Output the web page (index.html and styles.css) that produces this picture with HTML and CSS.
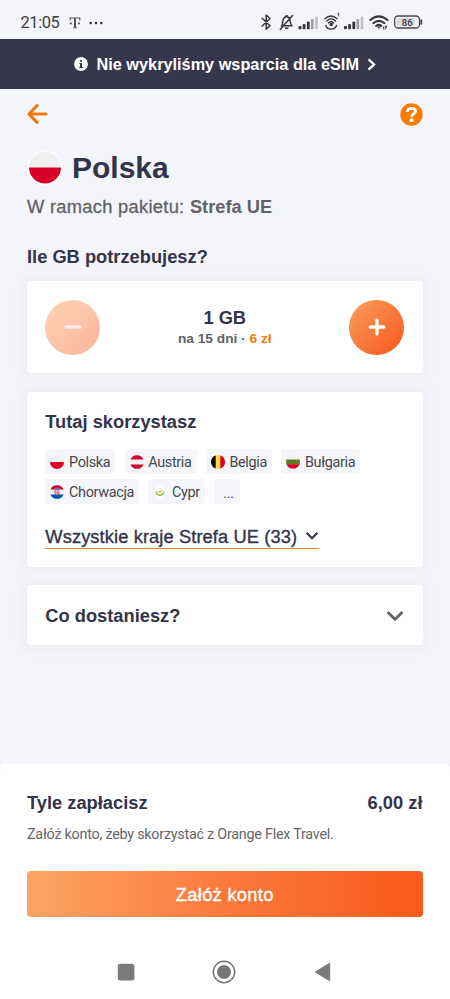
FILE: index.html
```
<!DOCTYPE html>
<html lang="pl">
<head>
<meta charset="utf-8">
<title>Polska</title>
<link rel="stylesheet" href="styles.css">
</head>
<body>
<div class="screen">
  <div class="status">
    <span class="clock">21:05</span>
    <svg class="carrier" width="12" height="14" viewBox="0 0 12 14"><path d="M1.200 4.500V2H10.800V4.500M4 11.700H8" fill="none" stroke="#55565b" stroke-width="1.100"/><path d="M5 2H7V11.500H5ZM1 6.500H2.800V8.300H1ZM9.200 6.500H11V8.300H9.200Z" fill="#55565b"/></svg>
    <svg class="more" width="14" height="4" viewBox="0 0 14 4"><g fill="#35363b"><circle cx="1.700" cy="2" r="1.300"/><circle cx="7" cy="2" r="1.300"/><circle cx="12.300" cy="2" r="1.300"/></g></svg>
    <svg class="indicators" width="164" height="20" viewBox="0 0 164 20">
      <g fill="none" stroke="#35363b" stroke-width="1.500" stroke-linejoin="round" stroke-linecap="round">
        <path d="M2.200 6.200 10 13.700 6.200 17.200V3L10 6.500 2.200 14"/>
        <path d="M21.500 13.800C23 12.500 22.500 10.500 23 8.200C23.600 5.700 25 4.800 26.500 4.800C28.800 4.800 30 6.500 30.200 9.200C30.300 11.800 30.700 12.800 32 13.800H24.500M20.300 17.200 32.500 3.500"/>
      </g>
      <path d="M24.500 15.500H29A2.300 2.300 0 0 1 24.500 15.500ZM25.600 3H27.800V5H25.600Z" fill="#35363b"/>
      <g fill="#35363b"><rect x="38.500" y="14" width="3" height="3.200" rx="1"/><rect x="42.700" y="12" width="2.800" height="5.200" rx="1"/><rect x="46.900" y="9.500" width="2.800" height="7.700" rx="1"/><rect x="84" y="14" width="3" height="3.200" rx="1"/><rect x="88.200" y="12" width="2.800" height="5.200" rx="1"/><rect x="92.400" y="9.500" width="2.800" height="7.700" rx="1"/></g>
      <g fill="#9b9ca1"><rect x="51" y="7" width="2.600" height="10.200" rx="1"/><rect x="96.500" y="7" width="2.600" height="10.200" rx="1"/></g>
      <g fill="#bfc0c6"><rect x="55.200" y="4.500" width="2.600" height="12.700" rx="1"/><rect x="100.700" y="4.500" width="2.600" height="12.700" rx="1"/></g>
      <g fill="none" stroke="#35363b" stroke-width="1.300" stroke-linecap="round">
        <path d="M64.800 6.800Q71 1.200 77.200 6.800M66.700 9Q71.200 4.800 75.600 9M68.600 11Q71.200 8.500 73.700 11M65.700 13.300Q67 17.200 71.200 17.200T76.600 13.300"/>
        <path d="M77.800 1.800 78.700 1.200V4" stroke-width=".9"/>
      </g>
      <circle cx="71.200" cy="12.500" r="1.700" fill="#35363b"/>
      <g fill="none" stroke="#35363b" stroke-width="2" stroke-linecap="round">
        <path d="M110.300 8Q118.800 .8 127.500 8M113.300 11.200Q118.900 6.500 124.500 11.200M116.200 14Q118.900 11.800 121.300 13.900"/>
      </g>
      <path d="M117 14.500H120.800L118.900 17ZM122.500 16 124.200 13.700V17.400H123.300V16ZM125.200 13.700H127V14.600L125.800 17.400H125.200Z" fill="#35363b"/>
      <rect x="134.700" y="4" width="24.800" height="12" rx="3.500" fill="none" stroke="#45464b" stroke-width="1.300"/>
      <rect x="137" y="6" width="18" height="8" rx="1.500" fill="#d9dadf"/>
      <path d="M161.300 8.200V11.800" stroke="#45464b" stroke-width="1.800" stroke-linecap="round"/>
      <text class="battery" x="147.200" y="13.600" text-anchor="middle">86</text>
    </svg>
  </div>

  <div class="banner">
    <svg width="14" height="14" viewBox="0 0 14 14"><circle cx="7" cy="7" r="6.900" fill="#fff"/><path d="M5.300 6H8V10H9.200V11H5V10H6V7H5.300ZM6 2.900H8V4.800H6Z" fill="#36364c"/></svg>
    <span class="banner-text">Nie wykryliśmy wsparcia dla eSIM</span>
    <svg width="9" height="13" viewBox="0 0 9 13"><path d="M1.500 1.300 7 6.500 1.500 11.700" fill="none" stroke="#fff" stroke-width="2.400"/></svg>
  </div>

  <main class="content">
    <div class="toolbar">
      <svg width="21" height="20" viewBox="0 0 21 20"><path d="M10 1.700 2 10 10 18.300M2.500 10H19" fill="none" stroke="#ee7b12" stroke-width="3.200" stroke-linecap="round" stroke-linejoin="round"/></svg>
      <svg width="23" height="23" viewBox="0 0 23 23"><circle cx="11.500" cy="11.500" r="11.200" fill="#fb7c05"/><path d="M7.400 8.900C7.600 6.400 9.200 5.400 11.500 5.400C13.900 5.400 15.500 6.500 15.500 8.400C15.500 11 11.600 10.700 11.600 13.900" fill="none" stroke="#fff" stroke-width="2.800"/><circle cx="11.500" cy="17.200" r="1.900" fill="#fff"/></svg>
    </div>

    <div class="heading">
      <svg width="36" height="36" viewBox="0 0 36 36"><circle cx="18" cy="18" r="17.500" fill="#fff"/><path d="M2 17.500A16 16 0 0 1 34 17.500Z" fill="#f0f0f0"/><path d="M2 17.500A16 16 0 0 0 34 17.500Z" fill="#d80027"/></svg>
      <h1 class="title">Polska</h1>
    </div>
    <p class="package"><span class="package-label">W ramach pakietu: </span><b>Strefa UE</b></p>

    <h2 class="question">Ile GB potrzebujesz?</h2>
    <section class="card stepper">
      <div class="round round-off"><svg width="18" height="18" viewBox="0 0 18 18"><path d="M2 9H16" stroke="#fff" stroke-opacity=".7" stroke-width="3.400" stroke-linecap="round"/></svg></div>
      <div class="amount">
        <div class="amount-value">1 GB</div>
        <div class="amount-note">na 15 dni · <span class="price">6 zł</span></div>
      </div>
      <div class="round"><svg width="18" height="18" viewBox="0 0 18 18"><path d="M2.300 9H15.700M9 2.300V15.700" stroke="#fff" stroke-width="3.400" stroke-linecap="round"/></svg></div>
    </section>

    <section class="card places">
      <h2 class="card-title">Tutaj skorzystasz</h2>
      <div class="chips">
        <span class="chip"><svg class="flag" viewBox="0 0 14 14"><path d="M0 7A7 7 0 0 1 14 7Z" fill="#f1f1f3"/><path d="M0 7A7 7 0 0 0 14 7Z" fill="#e1001f"/></svg><span class="country">Polska</span></span>
        <span class="chip"><svg class="flag" viewBox="0 0 14 14"><circle cx="7" cy="7" r="7" fill="#f2f2f2"/><path d="M.5 4.600A7 7 0 0 1 13.500 4.600ZM.5 9.400A7 7 0 0 0 13.500 9.400Z" fill="#d30930"/></svg><span class="country">Austria</span></span>
        <span class="chip"><svg class="flag" viewBox="0 0 14 14"><circle cx="7" cy="7" r="7" fill="#ffda44"/><path d="M4.700.4A7 7 0 0 0 4.700 13.600Z" fill="#0c0c0c"/><path d="M9.300.4A7 7 0 0 1 9.300 13.600Z" fill="#d80027"/></svg><span class="country">Belgia</span></span>
        <span class="chip"><svg class="flag" viewBox="0 0 14 14"><path d="M.5 4.600A7 7 0 0 1 13.500 4.600Z" fill="#f0f0f0"/><path d="M.4 4.500H13.600Q14.300 7 13.500 9.400H.5Q-.3 7 .4 4.500Z" fill="#5b7b2b"/><path d="M.5 9.200A7 7 0 0 0 13.500 9.200Z" fill="#d80027"/></svg><span class="country">Bułgaria</span></span>
        <span class="chip"><svg class="flag" viewBox="0 0 14 14"><circle cx="7" cy="7" r="7" fill="#f2f2f2"/><path d="M.5 4.600A7 7 0 0 1 13.500 4.600Z" fill="#d80027"/><path d="M.5 9.400A7 7 0 0 0 13.500 9.400Z" fill="#0052b4"/><path d="M4.600 3.800H9.400V8.500Q9.400 10.200 7 10.500Q4.600 10.200 4.600 8.500Z" fill="#c96b86"/><path d="M4.600 2.400 5.800 3 7 2.300 8.200 3 9.400 2.400V4.200H4.600Z" fill="#5a7fc8"/><path d="M5.800 5.200H7V6.400H5.800ZM8.200 5.200H9.400V6.400H8.200ZM7 6.400H8.200V7.600H7ZM5.800 7.600H7V8.800H5.800Z" fill="#f0dbe2"/></svg><span class="country">Chorwacja</span></span>
        <span class="chip"><svg class="flag" viewBox="0 0 14 14"><circle cx="7" cy="7" r="7" fill="#fbfbfb"/><path d="M3 6.800Q4 10.200 7 10.300Q10 10.200 11 6.800" fill="none" stroke="#93b35c" stroke-width="1.400"/><path d="M4.300 6 6.600 8Q9.300 7.500 10 4.600Q8.500 5.800 6.500 6Z" fill="#e3cf4c"/></svg><span class="country">Cypr</span></span>
        <span class="chip chip-more">...</span>
      </div>
      <div class="all"><span class="all-text">Wszystkie kraje Strefa UE (33)</span><svg width="14" height="10" viewBox="0 0 14 10"><path d="M1.500 1.700 7 7.200 12.500 1.700" fill="none" stroke="#36364c" stroke-width="2.200"/></svg></div>
    </section>

    <section class="card details">
      <h2 class="card-title">Co dostaniesz?</h2>
      <svg width="18" height="12" viewBox="0 0 18 12"><path d="M1.500 2 9 9.300 16.500 2" fill="none" stroke="#636365" stroke-width="2.800"/></svg>
    </section>
  </main>

  <footer class="summary">
    <div class="total"><span>Tyle zapłacisz</span><span>6,00 zł</span></div>
    <p class="hint">Załóż konto, żeby skorzystać z Orange Flex Travel.</p>
    <div class="button">Załóż konto</div>
  </footer>

  <nav class="navbar">
    <svg width="24" height="24" viewBox="0 0 24 24"><rect x="3.800" y="3.800" width="16.600" height="16.600" rx="2.500" fill="#7a7a7a"/></svg>
    <svg width="24" height="24" viewBox="0 0 24 24"><circle cx="12" cy="12" r="10.700" fill="none" stroke="#777" stroke-width="1.500"/><circle cx="12" cy="12" r="7" fill="#777"/></svg>
    <svg width="24" height="24" viewBox="0 0 24 24"><path d="M4.300 12 18.700 3.200V20.800Z" fill="#7a7a7a" stroke="#7a7a7a" stroke-width="1" stroke-linejoin="round"/></svg>
  </nav>
</div>
</body>
</html>
```
FILE: styles.css
```
* { box-sizing: border-box; }

body {
  margin: 0;
  background: #f4f5fa;
  color: #33334a;
  font-family: "Liberation Sans", sans-serif;
  font-size: 18.3px;
}

svg { display: block; flex: none; }
h1, h2, p { margin: 0; }

.screen {
  width: 450px;
  height: 999px;
  display: flex;
  flex-direction: column;
  overflow: hidden;
}

.status {
  height: 39px;
  padding: 6px 26px 0 20.5px;
  display: flex;
  align-items: center;
}
.clock {
  width: 48.5px;
  font: 16.5px/20px Roboto, sans-serif;
  letter-spacing: -.45px;
  color: #3c3d42;
}
.carrier { margin-right: 8px; }
.indicators { margin: -1px 0 0 auto; }
.battery { font: 500 9.5px Roboto, sans-serif; fill: #35363b; }

.banner {
  height: 50px;
  background: #36364c;
  color: #fff;
  display: flex;
  align-items: center;
  padding-left: 73.5px;
}
.banner-text {
  font-weight: bold;
  font-size: 16.3px;
  margin: 0 8.5px 0 9px;
  white-space: nowrap;
}

.content { flex: 1; padding: 0 27.5px 0 27px; }
.toolbar {
  height: 50px;
  display: flex;
  align-items: center;
  justify-content: space-between;
}
.heading {
  height: 57px;
  display: flex;
  align-items: center;
  gap: 9px;
}
.title { font-size: 30px; line-height: 36px; }
.package { line-height: 22px; margin-top: -.5px; color: #626264; white-space: nowrap; }
.package-label { letter-spacing: .3px; -webkit-text-stroke: .3px #626264; }
.question { font-size: 18.3px; line-height: 22px; margin: 28.5px 0 13.3px; }

.card {
  background: #fff;
  border-radius: 4px;
  box-shadow: 0 0 12px 4px rgba(60, 50, 30, .045);
  margin-bottom: 18.3px;
}
.stepper {
  height: 92px;
  padding: 0 18.3px;
  display: flex;
  align-items: center;
  justify-content: space-between;
}
.round {
  width: 55px;
  height: 55px;
  border-radius: 50%;
  background: linear-gradient(135deg, #fa9f5b, #f9561d);
  display: flex;
  align-items: center;
  justify-content: center;
}
.round-off { opacity: .44; }
.amount { text-align: center; font-weight: bold; padding-top: 2px; }
.amount-value { line-height: 22px; }
.amount-note { font-size: 13.7px; line-height: 20px; color: #626264; }
.price { color: #ee7b12; }

.places { height: 175.5px; padding: 19.5px 18.3px 0; }
.card-title { font-size: 18.3px; line-height: 22px; }
.chips {
  display: flex;
  flex-wrap: wrap;
  gap: 4.7px 9.2px;
  margin-top: 16px;
}
.chip {
  height: 25.3px;
  padding: 0 5px;
  border-radius: 3px;
  background: #f5f6fa;
  display: flex;
  align-items: center;
  font: 14.4px/20px Roboto, sans-serif;
  letter-spacing: -.32px;
  color: #45464f;
}
.country { padding-top: 3px; }
.chip-more { padding: 4px 6px 0 9px; letter-spacing: -.2px; }
.flag { width: 14px; height: 14px; margin-right: 4.7px; }
.all {
  width: 273.5px;
  margin-top: 20.5px;
  height: 24px;
  display: flex;
  align-items: center;
  justify-content: space-between;
  border-bottom: 1.5px solid #e8853a;
  white-space: nowrap;
}
.all-text { padding-top: 1.5px; letter-spacing: .1px; -webkit-text-stroke: .35px #33334a; }

.details {
  height: 60px;
  padding: 1px 18.3px 0;
  display: flex;
  align-items: center;
  justify-content: space-between;
}

.summary {
  height: 179px;
  padding: 28px 27.5px 0 27px;
  border-radius: 5px 5px 0 0;
  background: #fff;
}
.total {
  display: flex;
  justify-content: space-between;
  font-weight: bold;
  line-height: 22px;
}
.hint {
  margin-top: 11px;
  font: 14.4px/20px Roboto, sans-serif;
  letter-spacing: -.26px;
  color: #66666a;
  white-space: nowrap;
}
.button {
  height: 46px;
  margin-top: 26px;
  border-radius: 4px;
  background: linear-gradient(90deg, #fca566, #fb7637 55%, #f85a1c);
  color: #fff;
  text-align: center;
  line-height: 47px;
  letter-spacing: .3px;
  -webkit-text-stroke: .35px #fff;
}

.navbar {
  height: 56px;
  background: #fff;
  display: flex;
  justify-content: center;
  align-items: center;
  gap: 74.5px;
  padding: 1px 2px 0 0;
}
```
